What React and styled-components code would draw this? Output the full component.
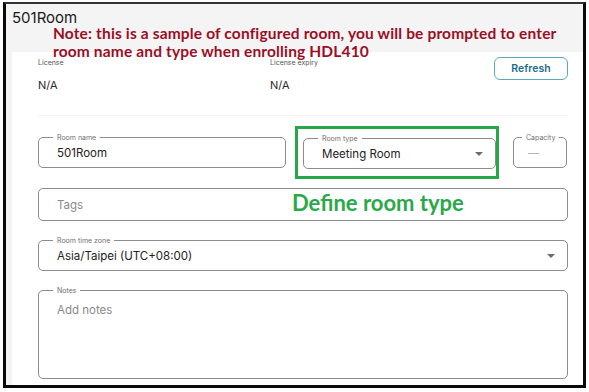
import styled, { createGlobalStyle } from "styled-components";

const GlobalStyle = createGlobalStyle`
  html, body {
    margin: 0;
    padding: 0;
    background: #ffffff;
  }
  body {
    font-family: Inter, "Liberation Sans", Arial, sans-serif;
    color: #1f1f1f;
  }
`;

const Frame = styled.div`
  position: relative;
  box-sizing: border-box;
  margin: 2px 0 0 3px;
  width: 583px;
  height: 386px;
  border: 3px solid #0a0a0a;
  border-top: 2px solid #333;
  background: #f4f4f4;
  display: flex;
  flex-direction: column;
`;

const Header = styled.header`
  height: 48px;
  padding: 5px 0 0 6px;
  box-sizing: border-box;
`;

const Title = styled.h1`
  margin: 0;
  font-size: 15px;
  font-weight: 400;
  line-height: 18px;
  color: #1a1a1a;
`;

const Note = styled.p`
  position: absolute;
  top: 20px;
  left: 47px;
  margin: 0;
  font-family: Lato, "Open Sans", sans-serif;
  font-weight: 700;
  font-size: 15.5px;
  letter-spacing: 0.15px;
  line-height: 18px;
  color: #9c0e24;
`;

const Panel = styled.main`
  flex: 1;
  margin-left: 6px;
  background: #ffffff;
  padding: 0 15px 0 26px;
  display: flex;
  flex-direction: column;
`;

const InfoRow = styled.section`
  height: 64px;
  display: flex;
  align-items: flex-start;
  border-bottom: 1px solid #f4f4f4;
  box-sizing: border-box;
`;

const InfoItem = styled.div`
  width: ${(p) => p.$w}px;
  padding-top: 6px;
`;

const InfoLabel = styled.div`
  font-size: 7px;
  line-height: 9px;
  color: #555;
`;

const InfoValue = styled.div`
  margin-top: 11px;
  font-size: 11px;
  line-height: 14px;
  color: #2a2a2a;
`;

const RefreshButton = styled.button`
  margin: 5px 0 0 auto;
  width: 74px;
  height: 23px;
  border: 1px solid #5aaabd;
  border-radius: 6px;
  background: #fff;
  color: #1b6d86;
  font-family: Inter, "Liberation Sans", sans-serif;
  font-weight: 600;
  font-size: 10.5px;
  padding: 0;
`;

const FieldRow = styled.div`
  margin-top: 10px;
  display: flex;
  align-items: center;
`;

const Highlight = styled.div`
  width: 204px;
  height: 53px;
  box-sizing: border-box;
  border: 3px solid #27a64a;
  padding: 9px 0 0 5px;
  margin: 0 14px 0 9px;
`;

const Field = styled.div`
  position: relative;
  box-sizing: border-box;
  width: ${(p) => (p.$w ? `${p.$w}px` : "100%")};
  height: ${(p) => p.$h || 31}px;
  margin-top: ${(p) => p.$mt || 0}px;
  border: 1px solid #8c8c8c;
  border-radius: 5px;
  display: flex;
  align-items: ${(p) => (p.$top ? "flex-start" : "center")};
  padding: ${(p) => (p.$top ? "12px 18px 0 18px" : "0 12px 0 18px")};
`;

const FieldLabel = styled.span`
  position: absolute;
  top: -5px;
  left: ${(p) => p.$left || 14}px;
  padding: 0 4px;
  background: #fff;
  font-size: 7px;
  line-height: 9px;
  color: #707070;
`;

const Value = styled.span`
  font-size: 11.5px;
  color: ${(p) => (p.$muted ? "#8a8a8a" : "#222")};
  flex: 1;
`;

const Dash = styled.span`
  font-size: 11px;
  color: #b5b5b5;
  margin-left: -4px;
`;

const Caret = styled.span`
  width: 0;
  height: 0;
  border-left: 4px solid transparent;
  border-right: 4px solid transparent;
  border-top: 4px solid #6b6b6b;
`;

const Callout = styled.span`
  position: absolute;
  left: 253px;
  top: 0px;
  font-family: Lato, "Open Sans", sans-serif;
  font-weight: 700;
  font-size: 22px;
  color: #2aa84a;
`;

export default function App() {
  return (
    <>
      <GlobalStyle />
      <Frame>
        <Header>
          <Title>501Room</Title>
        </Header>
        <Note>
          Note: this is a sample of configured room, you will be prompted to enter
          <br />
          room name and type when enrolling HDL410
        </Note>
        <Panel>
          <InfoRow>
            <InfoItem $w={232}>
              <InfoLabel>License</InfoLabel>
              <InfoValue>N/A</InfoValue>
            </InfoItem>
            <InfoItem $w={150}>
              <InfoLabel>License expiry</InfoLabel>
              <InfoValue>N/A</InfoValue>
            </InfoItem>
            <RefreshButton>Refresh</RefreshButton>
          </InfoRow>

          <FieldRow>
            <Field $w={248}>
              <FieldLabel>Room name</FieldLabel>
              <Value>501Room</Value>
            </Field>
            <Highlight>
              <Field $w={193}>
                <FieldLabel>Room type</FieldLabel>
                <Value>Meeting Room</Value>
                <Caret />
              </Field>
            </Highlight>
            <Field $w={54}>
              <FieldLabel $left={8}>Capacity</FieldLabel>
              <Dash>—</Dash>
            </Field>
          </FieldRow>

          <Field $h={33} $mt={9}>
            <Value $muted>Tags</Value>
            <Callout>Define room type</Callout>
          </Field>

          <Field $mt={19}>
            <FieldLabel>Room time zone</FieldLabel>
            <Value>Asia/Taipei (UTC+08:00)</Value>
            <Caret />
          </Field>

          <Field $h={89} $mt={19} $top>
            <FieldLabel>Notes</FieldLabel>
            <Value $muted>Add notes</Value>
          </Field>
        </Panel>
      </Frame>
    </>
  );
}
